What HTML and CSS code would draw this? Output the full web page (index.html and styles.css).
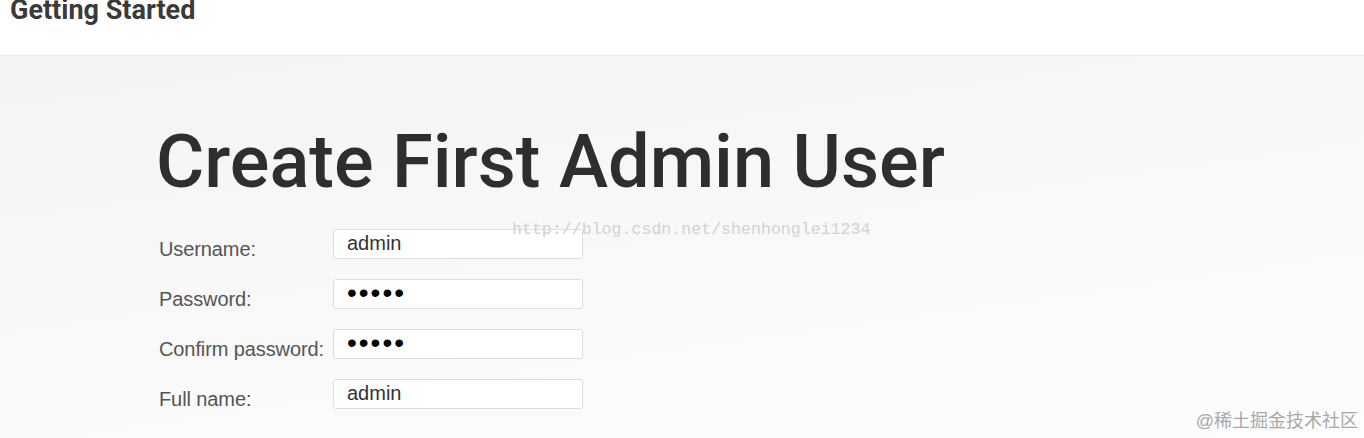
FILE: index.html
```html
<!DOCTYPE html>
<html lang="en">
<head>
    <meta charset="UTF-8">
    <title>Getting Started</title>
    <link rel="stylesheet" href="styles.css">
</head>
<body>
    <div class="top-bar">
        <h3 class="top-title">Getting Started</h3>
    </div>
    <div class="setup-panel">
        <h1 class="setup-title">Create First Admin User</h1>
        <form class="admin-form">
            <label for="username">Username:</label>
            <input type="text" id="username" value="admin">
            <label for="password1">Password:</label>
            <input type="password" id="password1" value="admin">
            <label for="password2">Confirm password:</label>
            <input type="password" id="password2" value="admin">
            <label for="fullname">Full name:</label>
            <input type="text" id="fullname" value="admin">
        </form>
        <div class="watermark">http://blog.csdn.net/shenhonglei1234</div>
        <div class="site-mark">@稀土掘金技术社区</div>
    </div>
</body>
</html>
```
FILE: styles.css
```css
html, body {
    margin: 0;
    padding: 0;
    height: 100%;
    overflow: hidden;
}
body {
    font-family: Roboto, "Liberation Sans", sans-serif;
    color: #333;
    background-color: #fff;
}
.top-bar {
    height: 56px;
    padding-left: 10px;
    background-color: #fff;
    border-bottom: 1px solid #ececec;
    box-sizing: border-box;
}
.top-title {
    margin: 0;
    font-size: 27px;
    line-height: 21px;
    font-weight: 700;
    color: #3a3a3a;
}
.setup-panel {
    position: relative;
    height: calc(100% - 56px);
    padding: 68px 0 0 156px;
    box-sizing: border-box;
    background: linear-gradient(172deg, #f4f4f4 0%, #f8f8f8 45%, #fdfdfd 100%);
}
.setup-title {
    margin: 0;
    font-size: 74px;
    line-height: 75px;
    font-weight: 500;
    color: #2e2e2e;
}
.admin-form {
    display: grid;
    grid-template-columns: 177px 250px;
    grid-auto-rows: 30px;
    row-gap: 20px;
    margin-top: 30px;
}
.admin-form label {
    font-family: "Liberation Sans", Arial, sans-serif;
    font-size: 20px;
    letter-spacing: -0.1px;
    color: #555;
    padding-left: 3px;
    line-height: 30px;
    padding-top: 5px;
    white-space: nowrap;
}
.admin-form input {
    box-sizing: border-box;
    height: 30px;
    width: 250px;
    margin: 0;
    padding: 0 0 2px 13px;
    border: 1px solid #dedede;
    border-radius: 3px;
    background-color: #fff;
    font-family: "Liberation Sans", Arial, sans-serif;
    font-size: 20px;
    color: #333;
    outline: none;
}
.admin-form input[type="password"] {
    font-size: 28px;
    letter-spacing: 2px;
    color: #000;
}
.watermark {
    position: absolute;
    left: 512px;
    top: 164px;
    font-family: "Liberation Mono", monospace;
    font-size: 16.6px;
    color: #d2d2d2;
}
.site-mark {
    position: absolute;
    right: 6px;
    bottom: 6px;
    font-family: "Liberation Sans", "Noto Sans CJK SC", sans-serif;
    font-size: 18px;
    color: #a8a8a8;
}
```
